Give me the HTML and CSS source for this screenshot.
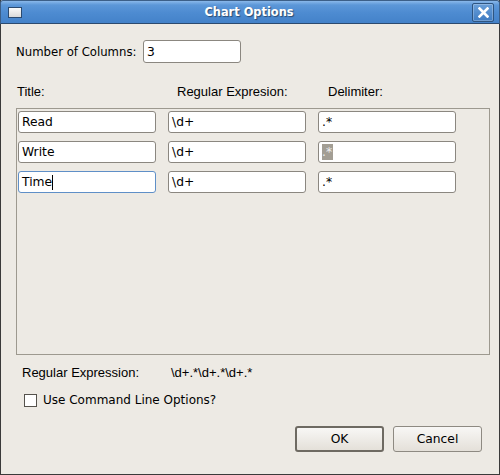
FILE: index.html
```html
<!DOCTYPE html>
<html>
<head>
<meta charset="utf-8">
<link rel="stylesheet" href="styles.css">
</head>
<body>
<div class="window">
  <div class="titlebar">
    <span class="win-icon"></span>
    <span class="title">Chart Options</span>
    <span class="close-btn">
      <svg width="11" height="11" viewBox="0 0 11 11"><path d="M1.5 1.5 L9.5 9.5 M9.5 1.5 L1.5 9.5" stroke="#fff" stroke-width="2.6" stroke-linecap="square"/></svg>
    </span>
  </div>
  <div class="content">
    <div class="cols-row">
      <span class="label">Number of Columns:</span>
      <div class="field cols-field"><span>3</span></div>
    </div>
    <div class="headers">
      <span class="hdr h1">Title:</span>
      <span class="hdr h2">Regular Expresion:</span>
      <span class="hdr h3">Delimiter:</span>
    </div>
    <div class="panel">
      <div class="grid-row">
        <div class="field"><span>Read</span></div>
        <div class="field"><span>\d+</span></div>
        <div class="field"><span>.*</span></div>
      </div>
      <div class="grid-row">
        <div class="field"><span>Write</span></div>
        <div class="field"><span>\d+</span></div>
        <div class="field"><span class="sel">.*</span></div>
      </div>
      <div class="grid-row">
        <div class="field focus"><span>Time</span><i class="caret"></i></div>
        <div class="field"><span>\d+</span></div>
        <div class="field"><span>.*</span></div>
      </div>
    </div>
    <div class="regex-row">
      <span class="rl">Regular Expression:</span>
      <span class="rv">\d+.*\d+.*\d+.*</span>
    </div>
    <div class="check-row">
      <span class="checkbox"></span>
      <span class="check-label">Use Command Line Options?</span>
    </div>
    <div class="buttons">
      <div class="btn default">OK</div>
      <div class="btn">Cancel</div>
    </div>
  </div>
</div>
</body>
</html>
```
FILE: styles.css
```css
html, body {
  margin: 0;
  padding: 0;
  background: #edeae4;
}
.window {
  width: 500px;
  height: 475px;
  box-sizing: border-box;
  border: 1px solid #3a3a3a;
  border-top: none;
  background: #edeae4;
  font-family: "DejaVu Sans", sans-serif;
  font-size: 11.7px;
  color: #000;
  display: flex;
  flex-direction: column;
}
.titlebar {
  box-sizing: border-box;
  height: 24px;
  margin: 0 -1px;
  border: 1px solid #3c5f88;
  border-bottom: 1px solid #2c4a6e;
  border-radius: 3px 3px 0 0;
  background: linear-gradient(#8ab8ea 0px, #5c97d8 4px, #4d8bd1 12px, #4381c8 23px);
  display: flex;
  align-items: center;
}
.win-icon {
  width: 12px;
  height: 9px;
  margin-left: 7px;
  border: 1px solid #2b4a70;
  background: linear-gradient(#fafafa, #d9d9d9);
}
.title {
  flex: 1;
  text-align: center;
  color: #fff;
  font-weight: bold;
  font-size: 11.4px;
  text-shadow: 1px 1px 1px #2a4a70;
  margin-left: 4px;
}
.close-btn {
  width: 20px;
  height: 17px;
  margin-right: 5px;
  border: 1px solid #2e5581;
  border-radius: 2px;
  background: linear-gradient(#6a9fd9, #3f7cc2);
  box-shadow: inset 0 0 0 1px rgba(255,255,255,0.25);
  display: flex;
  align-items: center;
  justify-content: center;
}
.content {
  flex: 1;
  display: flex;
  flex-direction: column;
  padding: 0 9px 0 15px;
}
.cols-row {
  display: flex;
  align-items: center;
  margin-top: 16px;
  height: 23px;
}
.label {
  width: 127px;
}
.field {
  box-sizing: border-box;
  height: 22px;
  width: 138px;
  background: #fff;
  border: 1px solid #8b8780;
  border-radius: 3px;
  display: flex;
  align-items: center;
  padding-left: 3px;
  font-size: 12.3px;
}
.cols-field {
  width: 98px;
  height: 23px;
}
.field.focus {
  border-color: #5f8fc7;
}
.caret {
  display: block;
  width: 1px;
  height: 15px;
  background: #000;
}
.sel {
  background: #a39e94;
  color: #eeeeee;
  height: 16px;
  line-height: 16px;
  padding-right: 1px;
}
.headers {
  display: flex;
  margin-top: 21px;
  height: 16px;
  font-family: "Liberation Sans", sans-serif;
  font-size: 13px;
}
.hdr.h1 { width: 160px; margin-left: 1px; }
.hdr.h2 { width: 151px; }
.panel {
  margin-top: 8px;
  height: 247px;
  box-sizing: border-box;
  border: 1px solid #9d998f;
  padding: 2px 1px;
  display: flex;
  flex-direction: column;
  gap: 8px;
}
.grid-row {
  display: flex;
  gap: 12px;
}
.regex-row {
  display: flex;
  margin-top: 10px;
  margin-left: 6px;
  font-family: "Liberation Sans", sans-serif;
  font-size: 13px;
}
.rl { width: 149px; }
.check-row {
  display: flex;
  align-items: center;
  margin-top: 13px;
  margin-left: 8px;
  font-size: 12px;
}
.checkbox {
  width: 11px;
  height: 11px;
  border: 1px solid #55524c;
  background: #fff;
  margin-right: 6px;
}
.buttons {
  display: flex;
  justify-content: flex-end;
  gap: 9px;
  margin-top: 19px;
  margin-right: 8px;
}
.btn {
  box-sizing: border-box;
  width: 89px;
  height: 26px;
  border: 1px solid #8e8a82;
  border-radius: 3px;
  background: linear-gradient(#f8f7f5, #e4e0d9);
  display: flex;
  align-items: center;
  justify-content: center;
  font-size: 12.3px;
}
.btn.default {
  border: 2px solid #6e6a62;
}
```
